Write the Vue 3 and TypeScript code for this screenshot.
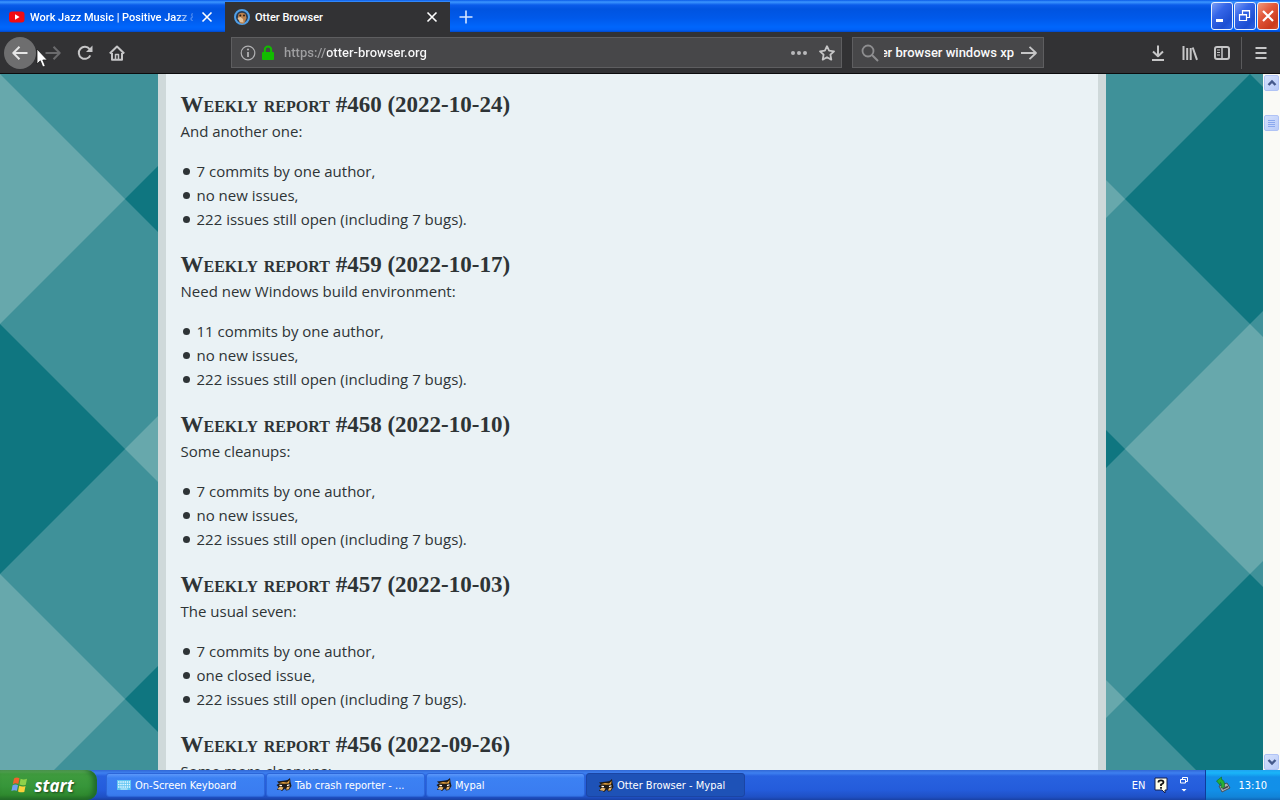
<script setup lang="ts">
import { ref } from 'vue'

interface Report {
  id: number
  date: string
  intro: string
  items: string[]
}

const open = '222 issues still open (including 7 bugs).'

const reports: Report[] = [
  { id: 460, date: '2022-10-24', intro: 'And another one:', items: ['7 commits by one author,', 'no new issues,', open] },
  { id: 459, date: '2022-10-17', intro: 'Need new Windows build environment:', items: ['11 commits by one author,', 'no new issues,', open] },
  { id: 458, date: '2022-10-10', intro: 'Some cleanups:', items: ['7 commits by one author,', 'no new issues,', open] },
  { id: 457, date: '2022-10-03', intro: 'The usual seven:', items: ['7 commits by one author,', 'one closed issue,', open] },
  { id: 456, date: '2022-09-26', intro: 'Some more cleanups:', items: [] },
]

const tasks = [
  { title: 'On-Screen Keyboard', icon: 'keyboard', active: false },
  { title: 'Tab crash reporter - ...', icon: 'mypal', active: false },
  { title: 'Mypal', icon: 'mypal', active: false },
  { title: 'Otter Browser - Mypal', icon: 'mypal', active: true },
]

const address = ref('https://otter-browser.org')
const query = ref('otter browser windows xp')
</script>

<template>
  <div class="desktop">
    <header class="titlebar">
      <div class="tab">
        <svg class="favicon" width="16" height="16" viewBox="0 0 16 16" aria-hidden="true">
          <rect x="0" y="2.5" width="15.5" height="11" rx="3" fill="#f00b12" />
          <path d="M6 5.2 L10.6 8 L6 10.8 Z" fill="#fff" />
        </svg>
        <span class="tab-title faded">Work Jazz Music | Positive Jazz &amp;</span>
        <button class="tab-close" aria-label="Close tab">
          <svg width="12" height="12" viewBox="0 0 12 12"><path d="M1.5 1.5 L10.5 10.5 M10.5 1.5 L1.5 10.5" /></svg>
        </button>
      </div>
      <div class="tab current">
        <svg class="favicon" width="16" height="16" viewBox="0 0 16 16" aria-hidden="true">
          <circle cx="8" cy="8" r="7" fill="#273a52" stroke="#4f9fe8" stroke-width="2" />
          <path d="M4.5 5 Q8 2.5 11.500 5 L12.500 9 L10.500 14 Q8 15.500 6 14 L3.800 9 Z" fill="#b9804d" />
          <path d="M3.500 9 L6.500 8 L9 10 L9.500 13.500 L6 13 Z" fill="#e6c49b" />
          <circle cx="6.300" cy="6.500" r="1" fill="#2b1c14" />
          <circle cx="10" cy="6.500" r="1" fill="#2b1c14" />
        </svg>
        <span class="tab-title">Otter Browser</span>
        <button class="tab-close" aria-label="Close tab">
          <svg width="12" height="12" viewBox="0 0 12 12"><path d="M1.5 1.5 L10.5 10.5 M10.5 1.5 L1.5 10.5" /></svg>
        </button>
      </div>
      <button class="new-tab" aria-label="New tab">
        <svg width="16" height="16" viewBox="0 0 16 16"><path d="M8 1.500 V14.500 M1.500 8 H14.500" /></svg>
      </button>
      <div class="window-buttons">
        <button class="win" aria-label="Minimize">
          <svg width="20" height="26" viewBox="0 0 20 26"><rect x="4" y="16" width="7" height="3" fill="#fff" /></svg>
        </button>
        <button class="win" aria-label="Restore">
          <svg width="20" height="26" viewBox="0 0 20 26">
            <path d="M7.500 11 V7.500 H14.500 V14.500 H12 M7 8 H15" fill="none" stroke="#fff" stroke-width="1.200" />
            <path d="M4.500 11.500 H11.500 V17.500 H4.500 Z M4 12 H12" fill="none" stroke="#fff" stroke-width="1.200" />
          </svg>
        </button>
        <button class="win close" aria-label="Close">
          <svg width="20" height="26" viewBox="0 0 20 26"><path d="M5 8 L15 18 M15 8 L5 18" stroke="#fff" stroke-width="2.200" /></svg>
        </button>
      </div>
    </header>

    <nav class="toolbar" aria-label="Navigation">
      <button class="tool back" aria-label="Back">
        <svg width="16" height="16" viewBox="0 0 16 16"><path d="M15.500 8 H1.500 M7.500 1.800 L1.300 8 L7.500 14.200" /></svg>
      </button>
      <button class="tool forward" aria-label="Forward" disabled>
        <svg width="16" height="16" viewBox="0 0 16 16"><path d="M0.500 8 H14.500 M8.500 1.800 L14.700 8 L8.500 14.200" /></svg>
      </button>
      <button class="tool" aria-label="Reload">
        <svg width="16" height="16" viewBox="0 0 16 16">
          <path d="M13.300 10.300 A6 6 0 1 1 12.600 4.200" />
          <path d="M15.500 0.500 V7 H9 Z" fill="#c6c6c7" stroke="none" />
        </svg>
      </button>
      <button class="tool" aria-label="Home">
        <svg width="16" height="16" viewBox="0 0 16 16">
          <path d="M0.800 8.500 L8 1.500 L15.200 8.500 M3 8 V14.800 H13 V8" />
          <path d="M6.500 14.500 V9.500 H9.500 V14.500" stroke-width="1.500" />
        </svg>
      </button>
      <div class="spacer"></div>
      <div class="field address">
        <svg width="16" height="16" viewBox="0 0 16 16" aria-hidden="true">
          <circle cx="8" cy="8" r="6.800" fill="none" stroke="#b1b1b3" stroke-width="1.200" />
          <path d="M8 7 V12" fill="none" stroke="#b1b1b3" stroke-width="1.800" />
          <circle cx="8" cy="4.500" r="1.100" fill="#b1b1b3" />
        </svg>
        <svg class="lock" width="14" height="16" viewBox="0 0 14 16" aria-hidden="true">
          <path d="M3.800 8 V4.800 A3.200 3.200 0 0 1 10.200 4.800 V8" fill="none" stroke="#12bc00" stroke-width="2" />
          <rect x="1" y="7" width="12" height="8" rx="1" fill="#12bc00" />
        </svg>
        <input v-model="address" class="url" type="text" aria-label="Address" spellcheck="false" />
        <button class="inner" aria-label="Page actions">
          <svg width="18" height="16" viewBox="0 0 18 16"><circle cx="3" cy="8" r="2" /><circle cx="9" cy="8" r="2" /><circle cx="15" cy="8" r="2" /></svg>
        </button>
        <button class="inner star" aria-label="Bookmark this page">
          <svg width="16" height="16" viewBox="0 0 16 16">
            <path d="M8 1.200 L10.100 5.700 L15 6.300 L11.400 9.700 L12.300 14.600 L8 12.200 L3.700 14.600 L4.600 9.700 L1 6.300 L5.900 5.700 Z" />
          </svg>
        </button>
      </div>
      <div class="field search">
        <svg width="18" height="18" viewBox="0 0 18 18" aria-hidden="true">
          <circle cx="7" cy="7" r="5.500" fill="none" stroke="#8e8e90" stroke-width="1.800" />
          <path d="M11 11 L17 17" stroke="#8e8e90" stroke-width="2" />
        </svg>
        <input v-model="query" class="query" type="text" dir="rtl" aria-label="Search" spellcheck="false" />
        <button class="inner go" aria-label="Go">
          <svg width="18" height="16" viewBox="0 0 18 16"><path d="M1 8 H16 M9.500 1.800 L16 8 L9.500 14.200" /></svg>
        </button>
      </div>
      <div class="spacer"></div>
      <button class="tool" aria-label="Downloads">
        <svg width="16" height="16" viewBox="0 0 16 16"><path d="M8 0.500 V11 M3 6.500 L8 11.300 L13 6.500 M2 15 H14" /></svg>
      </button>
      <button class="tool" aria-label="Library">
        <svg width="16" height="16" viewBox="0 0 16 16"><path d="M1.500 1 V15 M5.200 3 V15 M8.700 3 V15 M10.700 2.500 L15 14.800" /></svg>
      </button>
      <button class="tool" aria-label="Sidebars">
        <svg width="16" height="16" viewBox="0 0 16 16">
          <rect x="1" y="2" width="14" height="12" rx="2" />
          <path d="M8 2 V14" stroke-width="1.500" />
          <path d="M3 5 H6 M3 7.500 H6 M3 10 H6" stroke-width="1" />
        </svg>
      </button>
      <div class="divider"></div>
      <button class="tool" aria-label="Menu">
        <svg width="16" height="16" viewBox="0 0 16 16"><path d="M2.500 3 H13.500 M2.500 8 H13.500 M2.500 13 H13.500" /></svg>
      </button>
      <svg class="pointer" width="12" height="20" viewBox="0 0 12 20" aria-hidden="true">
        <path d="M1 1 V16 L4.300 12.800 L6.800 19 L9.300 18 L6.800 12 H11.300 Z" fill="#fff" stroke="#1d1d1d" stroke-width="0.800" />
      </svg>
    </nav>

    <div class="viewport">
      <div class="page">
        <svg class="pattern" width="100%" height="100%" aria-hidden="true">
          <defs>
            <pattern id="diamonds" width="500" height="500" patternUnits="userSpaceOnUse">
              <rect width="500" height="500" fill="#3f9199" />
              <path d="M0 0 L125 125 L0 250 Z M500 0 L375 125 L500 250 Z M250 250 L375 375 L250 500 L125 375 Z" fill="#67a8ac" />
              <path d="M250 0 L375 125 L250 250 L125 125 Z M0 250 L125 375 L0 500 Z M500 250 L375 375 L500 500 Z" fill="#0f7680" />
            </pattern>
          </defs>
          <rect width="100%" height="100%" fill="url(#diamonds)" />
        </svg>
        <main class="content">
          <article v-for="report in reports" :key="report.id" class="report">
            <h2>Weekly report #{{ report.id }} ({{ report.date }})</h2>
            <p>{{ report.intro }}</p>
            <ul v-if="report.items.length">
              <li v-for="item in report.items" :key="item">{{ item }}</li>
            </ul>
          </article>
        </main>
      </div>
      <div class="scrollbar">
        <button class="scroll-button" aria-label="Scroll up">
          <svg width="10" height="10" viewBox="0 0 10 10"><path d="M1.500 7 L5 3.500 L8.500 7" /></svg>
        </button>
        <div class="track">
          <div class="thumb"><i></i><i></i><i></i><i></i></div>
        </div>
        <button class="scroll-button" aria-label="Scroll down">
          <svg width="10" height="10" viewBox="0 0 10 10"><path d="M1.500 3 L5 6.500 L8.500 3" /></svg>
        </button>
      </div>
    </div>

    <footer class="taskbar">
      <button class="start">
        <svg width="18" height="18" viewBox="0 0 18 18" aria-hidden="true">
          <path d="M3 2.500 Q5.500 0.500 8.500 2.200 L7.300 8 Q4.500 6.500 1.800 8.200 Z" fill="#f0622c" />
          <path d="M9.600 2.800 Q12.500 4.300 16 2.800 L14.800 8.800 Q11.500 10 8.500 8.600 Z" fill="#8fd14a" />
          <path d="M1.600 9.300 Q4.300 7.800 7 9.200 L5.900 14.800 Q3 13.400 0.400 15 Z" fill="#6fa0f2" />
          <path d="M8.200 9.800 Q11.300 11.200 14.500 10 L13.300 15.900 Q10 17 7 15.500 Z" fill="#fbd13b" />
        </svg>
        <span>start</span>
      </button>
      <div class="tasks">
        <button v-for="task in tasks" :key="task.title" class="task" :class="{ active: task.active }">
          <svg v-if="task.icon === 'keyboard'" width="16" height="16" viewBox="0 0 16 16" aria-hidden="true">
            <rect x="1" y="3" width="14" height="10" fill="#5fc4f2" />
            <path d="M2 5 H14 M2 7.500 H14 M2 10 H14" stroke="#e3f7ff" stroke-width="1.300" stroke-dasharray="1.500 0.700" />
            <path d="M4.500 12 H11.500" stroke="#d4f0fc" stroke-width="1" />
          </svg>
          <svg v-else width="16" height="16" viewBox="0 0 16 16" aria-hidden="true">
            <path d="M1 4.500 L5 4 L9 3.500 L11.500 3 L14 1 L14.500 5 L15.500 9 L13 13 L10 13.500 L9 11.500 L6 14 L4 12.500 L1 13 L2.500 10 L0.500 8 L3 6.500 Z" fill="#211b16" />
            <path d="M2.500 6.300 L7 5 L11 5.500 L13.700 3 L13 6.500 L8 6.800 Z" fill="#e3a03d" />
            <path d="M1.500 12 L4 9.500 L7.500 10.500 L6 13 Z M10 12.500 L11 10 L14 9.500 L12.500 12.500 Z" fill="#e6b36a" />
            <path d="M3.500 8.300 L6 8.600 M11 8.600 L13.500 7.800" stroke="#fff" stroke-width="1.200" />
          </svg>
          <span>{{ task.title }}</span>
        </button>
      </div>
      <div class="language">
        <span>EN</span>
        <svg width="14" height="16" viewBox="0 0 14 16" aria-hidden="true">
          <path d="M1 1 H13 V13 H11 V16 L8 13 H1 Z" fill="#fffde8" stroke="#15204c" stroke-width="1" />
          <path d="M4.500 5.500 V4.800 Q4.500 3.300 7 3.300 Q9.500 3.300 9.500 5.300 Q9.500 6.500 7 7.500 V9 M7 10 V11.800" fill="none" stroke="#111" stroke-width="1.800" />
        </svg>
        <svg width="10" height="18" viewBox="0 0 10 18" aria-hidden="true">
          <path d="M3.500 3.500 V1.500 H8.500 V5.500 H6.500 M1.500 3.500 H6.500 V7 H1.500 Z" fill="none" stroke="#fff" stroke-width="1" />
          <path d="M2.500 13 H7.500 L5 15.500 Z" fill="#fff" />
        </svg>
      </div>
      <div class="tray">
        <svg width="16" height="18" viewBox="0 0 16 18" aria-hidden="true">
          <path d="M4 10 L12 7 L15 12 L7 16 Z" fill="#aab0b5" stroke="#44505c" stroke-width="1" />
          <path d="M7.500 13 L13 10.500" stroke="#3d444a" stroke-width="1.500" />
          <path d="M1.500 5 L6.500 1 L6.500 3.500 Q10 4 9.500 11 L6 12 Q7 7.500 5.500 6.500 L5 9 Z" fill="#27b034" stroke="#106c20" stroke-width="0.600" />
        </svg>
        <time>13:10</time>
      </div>
    </footer>
  </div>
</template>

<style>
html,
body {
  overflow: hidden;
}
</style>

<style scoped>
.desktop {
  display: flex;
  flex-direction: column;
  height: 100vh;
  overflow: hidden;
  font-family: Roboto, "Open Sans", sans-serif;
}

.desktop * {
  box-sizing: border-box;
}

button {
  display: flex;
  align-items: center;
  justify-content: center;
  flex: none;
  padding: 0;
  border: 0;
  background: none;
  color: inherit;
  font: inherit;
}

svg {
  display: block;
  flex: none;
}

.titlebar {
  display: flex;
  flex: none;
  height: 32px;
  padding-top: 2px;
  background: linear-gradient(#0a5be8 0, #3c96ff 2px, #0a5cea 5px, #0054e0 9px, #0059ea 18px, #0066fc 27px, #0060f6 30px, #0047c8 32px);
}

.tab {
  display: flex;
  align-items: center;
  width: 225px;
  padding: 0 12px 0 9px;
  color: #fff;
  font-size: 11px;
  font-weight: 500;
}

.tab.current {
  background: #323234;
}

.tab-title {
  flex: 1;
  min-width: 0;
  margin-left: 5px;
  overflow: hidden;
  white-space: nowrap;
}

.faded {
  margin-right: 8px;
  mask-image: linear-gradient(to right, #000 146px, transparent 168px);
}

.tab-close svg path {
  fill: none;
  stroke: #fff;
  stroke-width: 1.6;
}

.new-tab {
  width: 32px;
}

.new-tab path {
  fill: none;
  stroke: #d6e6ff;
  stroke-width: 1.6;
}

.window-buttons {
  display: flex;
  gap: 1px;
  margin-left: auto;
  padding-right: 1px;
}

.win {
  width: 22px;
  height: 28px;
  border: 1px solid #e8f0fd;
  border-radius: 3px;
  background: linear-gradient(135deg, #7b9df5 0, #3566e8 35%, #1c4ed2 75%, #2a62e6 100%);
}

.win.close {
  background: linear-gradient(135deg, #f0997c 0, #e2583a 40%, #c93a1c 80%, #d9512d 100%);
}

.toolbar {
  position: relative;
  display: flex;
  align-items: center;
  flex: none;
  height: 42px;
  padding: 0 3px 0 4px;
  border-bottom: 1px solid #0c0c0d;
  background: #323234;
}

.tool {
  width: 32px;
  height: 32px;
}

.tool svg {
  fill: none;
  stroke: #c6c6c7;
  stroke-width: 2;
  stroke-linejoin: round;
}

.back {
  margin-right: 1px;
  border-radius: 50%;
  background: #6e6e6f;
}

.back svg {
  stroke: #e6e6e6;
}

.forward svg {
  stroke: #6b6b6d;
}

.spacer {
  width: 98px;
}

.field {
  display: flex;
  align-items: center;
  height: 31px;
  border: 1px solid #5e5e60;
  background: #474749;
}

.field input {
  min-width: 0;
  padding: 0;
  border: 0;
  outline: 0;
  background: none;
  color: #f9f9fa;
  font: 500 13px Roboto, "Open Sans", sans-serif;
}

.address {
  flex: 1;
  padding: 0 6px 0 8px;
}

.lock {
  margin-left: 5px;
}

.field .url {
  flex: 1;
  height: 24px;
  margin-left: 9px;
  background: linear-gradient(to right, #a0a0a2 43px, #f9f9fa 43px);
  background-clip: text;
  color: transparent;
}

.inner svg {
  fill: #b9b9bb;
}

.star {
  margin-left: 11px;
}

.star svg,
.go svg {
  fill: none;
  stroke: #c6c6c7;
  stroke-width: 1.8;
  stroke-linejoin: round;
}

.search {
  width: 192px;
  margin-left: 10px;
  padding: 0 5px 0 8px;
}

.field .query {
  flex: 1;
  height: 24px;
  margin: 0 6px 0 5px;
}

.divider {
  width: 1px;
  height: 32px;
  margin: 0 3px;
  background: #5a5a5c;
}

.pointer {
  position: absolute;
  top: 16px;
  left: 36px;
}

.viewport {
  display: flex;
  flex: 1;
  min-height: 0;
}

.page {
  position: relative;
  flex: 1;
  min-width: 0;
  overflow: hidden;
}

.pattern {
  position: absolute;
  inset: 0;
}

.content {
  position: relative;
  max-width: 948px;
  min-height: 100%;
  margin: 0 auto;
  padding: 17px 15px 0;
  border: solid #cfd9da;
  border-width: 0 8px;
  background: #eaf2f5;
  color: #2e3436;
  font: 15px/24px "Open Sans", "Noto Sans", sans-serif;
}

.report {
  margin-bottom: 20px;
}

h2 {
  margin: 0;
  font: bold small-caps 23px/28px "Liberation Serif", serif;
}

p {
  margin: 0;
}

ul {
  margin: 16px 0 0;
  padding: 0;
  list-style: none;
}

li {
  display: flex;
  align-items: center;
  gap: 7px;
}

li::before {
  width: 7px;
  height: 7px;
  margin-left: 2px;
  border-radius: 50%;
  background: #2e3436;
  content: "";
}

.scrollbar {
  display: flex;
  flex-direction: column;
  flex: none;
  width: 17px;
  padding: 1px 0 0 1px;
  background: #fafaf6;
}

.scroll-button,
.thumb {
  width: 15px;
  height: 16px;
  border: 1px solid #b0c3f5;
  border-radius: 2px;
  background: linear-gradient(135deg, #d5e1fd, #b9cbf8);
}

.scroll-button path {
  fill: none;
  stroke: #45598c;
  stroke-width: 2.4;
}

.track {
  flex: 1;
  padding-top: 24px;
}

.thumb {
  display: flex;
  flex-direction: column;
  align-items: center;
  justify-content: center;
  gap: 1px;
}

.thumb i {
  width: 7px;
  height: 1px;
  background: #8ba8ee;
}

.taskbar {
  display: flex;
  flex: none;
  height: 30px;
  background: linear-gradient(#3168d5 0, #3e80f0 3px, #2862e0 6px, #245cdb 20px, #1f50c4 27px, #1941a5 30px);
  color: #fff;
  font: 11px "DejaVu Sans Condensed", "DejaVu Sans", sans-serif;
}

.start {
  gap: 5px;
  width: 97px;
  padding-right: 12px;
  border-radius: 0 10px 10px 0;
  background: linear-gradient(#6cb468 0, #3f9b3e 4px, #37963a 16px, #2f8a2f 25px, #236b25 30px);
  box-shadow: inset -4px 0 5px #206a2b;
  font: italic bold 17px "Open Sans", sans-serif;
  text-shadow: 1px 1px 2px #1d4a1d;
}

.tasks {
  display: flex;
  flex: 1;
  gap: 1px;
  min-width: 0;
  padding: 3px 0 3px 9px;
}

.task {
  flex: 0 1 159px;
  justify-content: flex-start;
  gap: 3px;
  min-width: 0;
  padding: 0 9px;
  overflow: hidden;
  border: 1px solid #2c66d8;
  border-radius: 3px;
  background: linear-gradient(#5b97fa 0, #3c81f3 4px, #3a7cf0 20px, #3171e0 24px);
  white-space: nowrap;
}

.task.active {
  padding-top: 1px;
  padding-left: 11px;
  border-color: #1b45a4;
  background: #1e52b7;
}

.language {
  display: flex;
  align-items: center;
  gap: 9px;
  padding-right: 16px;
}

.language svg:last-child {
  margin-left: 2px;
}

.tray {
  display: flex;
  align-items: center;
  gap: 7px;
  padding: 0 13px 0 9px;
  border-left: 1px solid #0d3c9c;
  background: linear-gradient(#1fa5f2 0, #19b5f8 3px, #1290e9 7px, #1290e8 20px, #1284d8 27px, #0f68b8 30px);
}
</style>
